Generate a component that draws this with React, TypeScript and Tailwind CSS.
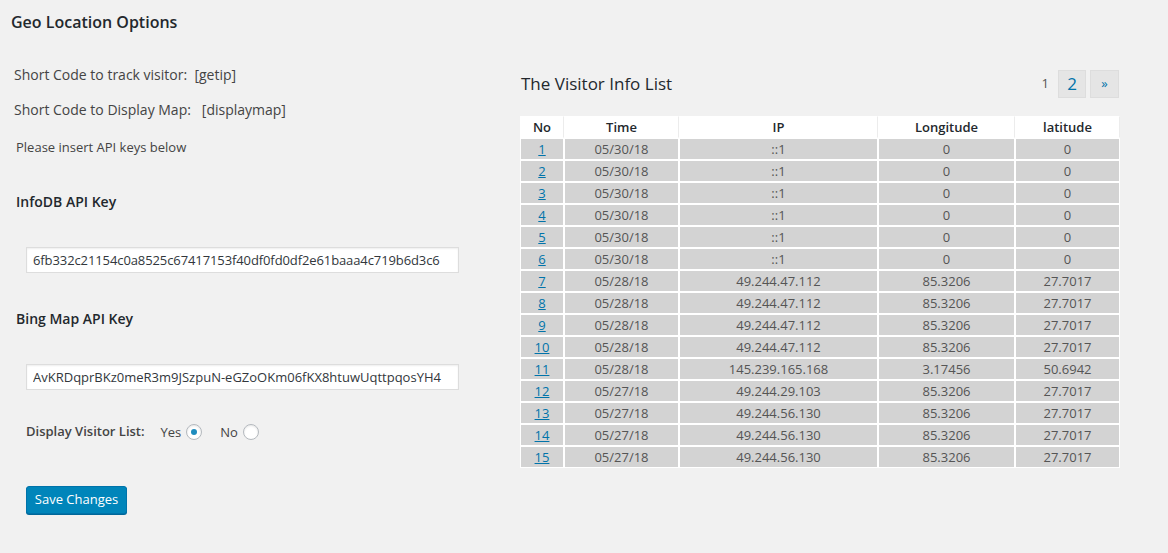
import React from 'react'

const rows = [
  ['1', '05/30/18', '::1', '0', '0'],
  ['2', '05/30/18', '::1', '0', '0'],
  ['3', '05/30/18', '::1', '0', '0'],
  ['4', '05/30/18', '::1', '0', '0'],
  ['5', '05/30/18', '::1', '0', '0'],
  ['6', '05/30/18', '::1', '0', '0'],
  ['7', '05/28/18', '49.244.47.112', '85.3206', '27.7017'],
  ['8', '05/28/18', '49.244.47.112', '85.3206', '27.7017'],
  ['9', '05/28/18', '49.244.47.112', '85.3206', '27.7017'],
  ['10', '05/28/18', '49.244.47.112', '85.3206', '27.7017'],
  ['11', '05/28/18', '145.239.165.168', '3.17456', '50.6942'],
  ['12', '05/27/18', '49.244.29.103', '85.3206', '27.7017'],
  ['13', '05/27/18', '49.244.56.130', '85.3206', '27.7017'],
  ['14', '05/27/18', '49.244.56.130', '85.3206', '27.7017'],
  ['15', '05/27/18', '49.244.56.130', '85.3206', '27.7017'],
]

function Radio({ checked }: { checked?: boolean }) {
  return (
    <span className="flex h-4 w-4 items-center justify-center rounded-full border border-[#b4b9be] bg-white shadow-[inset_0_1px_2px_rgba(0,0,0,0.1)]">
      {checked && <span className="h-[6px] w-[6px] rounded-full bg-[#1e8cbe]" />}
    </span>
  )
}

export default function App() {
  return (
    <div className="min-h-[553px] w-full bg-[#f1f1f1] font-['Open_Sans',sans-serif] text-[#444]">
      <h1 className="pl-[11px] pt-[11px] text-[16px] font-semibold leading-[22px] text-[#23282d]">
        Geo Location Options
      </h1>
      <div className="flex">
        <div className="w-[520px] shrink-0">
          <p className="ml-[14px] mt-[32px] text-[14px] leading-[20px] text-[#444]">
            Short Code to track visitor:&nbsp; [getip]
          </p>
          <p className="ml-[14px] mt-[15px] text-[14px] leading-[20px] text-[#444]">
            Short Code to Display Map:&nbsp;&nbsp; [displaymap]
          </p>
          <p className="ml-[16px] mt-[18px] text-[13px] leading-[18px] text-[#444]">Please insert API keys below</p>
          <p className="ml-[16px] mt-[36px] text-[14px] font-semibold leading-[20px] text-[#23282d]">InfoDB API Key</p>
          <input
            readOnly
            value="6fb332c21154c0a8525c67417153f40df0fd0df2e61baaa4c719b6d3c6"
            className="ml-[26px] mt-[35px] block h-[26px] w-[433px] border border-[#ddd] bg-white px-[6px] text-[13px] tracking-[-0.1px] text-[#32373c] shadow-[inset_0_1px_2px_rgba(0,0,0,0.07)] outline-none"
          />
          <p className="ml-[16px] mt-[36px] text-[14px] font-semibold leading-[20px] text-[#23282d]">Bing Map API Key</p>
          <input
            readOnly
            value="AvKRDqprBKz0meR3m9JSzpuN-eGZoOKm06fKX8htuwUqttpqosYH4"
            className="ml-[26px] mt-[35px] block h-[26px] w-[433px] border border-[#ddd] bg-white px-[6px] text-[13px] text-[#32373c] shadow-[inset_0_1px_2px_rgba(0,0,0,0.07)] outline-none"
          />
          <div className="ml-[26px] mt-[32px] flex h-[20px] items-center text-[13px]">
            <span className="font-semibold text-[#444]">Display Visitor List:</span>
            <span className="ml-[16px] mt-[2px]">Yes</span>
            <span className="ml-[5px]">
              <Radio checked />
            </span>
            <span className="ml-[18px] mt-[2px]">No</span>
            <span className="ml-[5px]">
              <Radio />
            </span>
          </div>
          <button className="ml-[26px] mt-[44px] block h-[28px] w-[101px] rounded-[3px] border border-[#0073aa] bg-[#0085ba] text-[13px] text-white shadow-[0_1px_0_#006799]">
            Save Changes
          </button>
        </div>

        <div className="w-[600px] shrink-0">
          <div className="mt-[37px] flex h-[28px] items-center justify-between">
            <h2 className="pl-[1px] text-[17px] font-medium leading-[24px] text-[#23282d]">The Visitor Info List</h2>
            <div className="flex items-center">
              <span className="mr-[9px] text-[13px] text-[#555]">1</span>
              <a className="flex h-[28px] w-[28px] items-center justify-center border border-[#ddd] bg-[#e5e5e5] text-[17px] text-[#0073aa]">
                2
              </a>
              <a className="ml-[4px] mr-[1px] flex h-[28px] w-[29px] items-center justify-center border border-[#ddd] bg-[#e5e5e5] text-[13px] text-[#0073aa]">
                »
              </a>
            </div>
          </div>
          <table className="mt-[18px] w-[600px] table-fixed border-separate border-spacing-0 text-center text-[13px]">
            <colgroup>
              <col className="w-[44px]" />
              <col className="w-[115px]" />
              <col className="w-[199px]" />
              <col className="w-[137px]" />
              <col className="w-[105px]" />
            </colgroup>
            <thead>
              <tr>
                {['No', 'Time', 'IP', 'Longitude', 'latitude'].map((h) => (
                  <th
                    key={h}
                    className="border border-white border-r-[#ececec] bg-white p-0 font-semibold leading-[20px] text-[#23282d]"
                  >
                    {h}
                  </th>
                ))}
              </tr>
            </thead>
            <tbody>
              {rows.map((r) => (
                <tr key={r[0]}>
                  <td className="border border-white bg-[#d3d3d3] p-0 leading-[20px]">
                    <a className="text-[#0073aa] underline">{r[0]}</a>
                  </td>
                  {r.slice(1).map((c, i) => (
                    <td key={i} className="border border-white bg-[#d3d3d3] p-0 leading-[20px] text-[#555]">
                      {c}
                    </td>
                  ))}
                </tr>
              ))}
            </tbody>
          </table>
        </div>
      </div>
    </div>
  )
}
